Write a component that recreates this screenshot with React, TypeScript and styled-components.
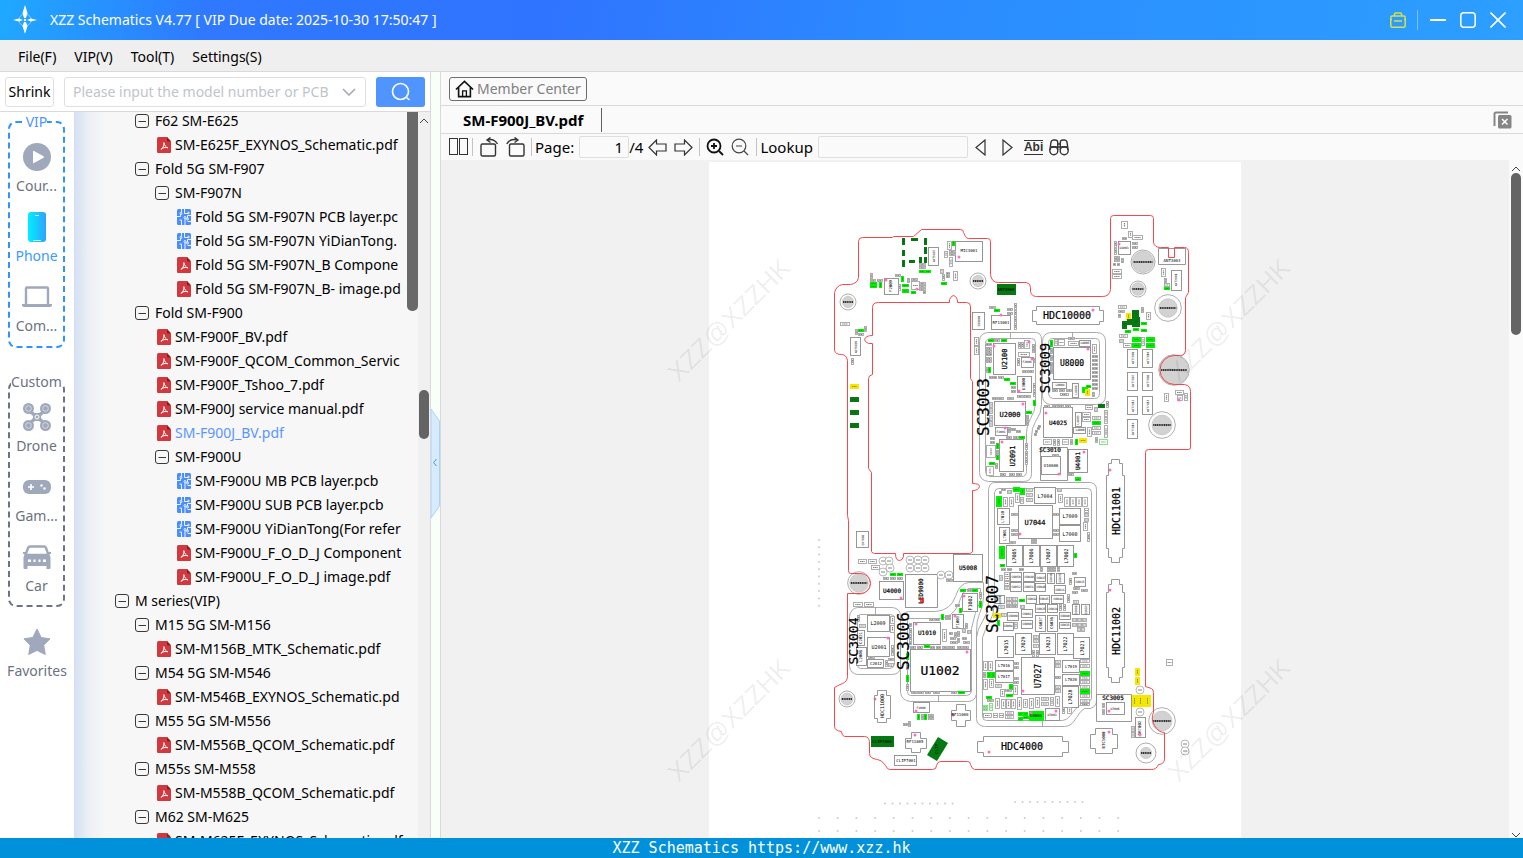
import React from "react";
import styled, { createGlobalStyle, css } from "styled-components";

const uiFont = `"Noto Sans", "Open Sans", sans-serif`;
const monoFont = `"DejaVu Sans Mono", "Liberation Mono", monospace`;

const Global = createGlobalStyle`
  * { box-sizing: border-box; }
  html, body { margin: 0; height: 100%; overflow: hidden; }
  body { font-family: ${uiFont}; font-size: 15px; line-height: 20px; color: #000; background: #fff; }
  button, input { font: inherit; color: inherit; }
  button { padding: 0; border: 0; background: none; display: inline-flex; align-items: center; justify-content: center; }
  svg { display: block; flex: none; }
`;

const Window = styled.div`
  display: flex;
  flex-direction: column;
  height: 100vh;
`;

const TitleBar = styled.header`
  display: flex;
  align-items: center;
  flex: none;
  height: 40px;
  padding: 0 10px;
  color: #fff;
  background: linear-gradient(100deg, #1fa9ff 0, #2f78ff 14%, #2f74ff 36%, #2b8bff 60%, #2c9fff 100%);
`;
const Title = styled.h1`
  margin: 0 auto 0 10px;
  font-size: 14px;
  font-weight: 400;
  white-space: nowrap;
`;
const WindowButton = styled.button`
  width: 30px;
  height: 30px;
`;
const TitleDivider = styled.span`
  width: 1px;
  height: 20px;
  margin: 0 5px 0 4px;
  background: #7fc0ff;
`;

const MenuBar = styled.nav`
  display: flex;
  align-items: center;
  gap: 18px;
  flex: none;
  height: 32px;
  padding: 2px 18px 0;
  font-size: 14px;
  background: #efefef;
  border-bottom: 1px solid #d9d9d9;
`;

const Body = styled.div`
  display: flex;
  flex: 1;
  min-height: 0;
`;
const Side = styled.aside`
  display: flex;
  flex-direction: column;
  flex: none;
  width: 431px;
  border-right: 1px solid #d9d9d9;
`;
const SearchRow = styled.form`
  display: flex;
  align-items: center;
  flex: none;
  height: 40px;
  padding: 0 5px;
  border-bottom: 1px solid #d9d9d9;
`;
const ShrinkButton = styled.button`
  width: 49px;
  height: 30px;
  margin-right: 10px;
  font-size: 14px;
  border: 1px solid #dcdfe6;
  border-radius: 3px;
`;
const SearchField = styled.label`
  display: flex;
  align-items: center;
  flex: 1;
  height: 30px;
  margin-right: 10px;
  padding: 0 9px 0 8px;
  font-size: 14px;
  border: 1px solid #dcdfe6;
  border-radius: 3px;
  input {
    flex: 1;
    min-width: 0;
    padding: 0;
    border: 0;
    outline: 0;
    background: none;
  }
  input::placeholder { color: #c0c4cc; opacity: 1; }
`;
const SearchButton = styled.button`
  width: 49px;
  height: 30px;
  border-radius: 3px;
  background: #4f94ff;
`;

const SideMain = styled.div`
  display: flex;
  flex: 1;
  min-height: 0;
`;
const Rail = styled.nav`
  flex: none;
  width: 74px;
  font-size: 14px;
`;
const RailGroup = styled.fieldset<{ $active?: boolean }>`
  width: 57px;
  height: ${(p) => (p.$active ? 236 : 235)}px;
  min-width: 0;
  margin: 0 0 ${(p) => (p.$active ? 24 : 4)}px 8px;
  padding: 0;
  border: 2px dashed ${(p) => (p.$active ? "#3095fa" : "#6b7385")};
  border-radius: 8px;
  legend {
    margin: 0 auto;
    padding: 0;
    color: ${(p) => (p.$active ? "#4f94ff" : "#6b7385")};
  }
`;
const RailItem = styled.button<{ $active?: boolean }>`
  display: flex;
  flex-direction: column;
  justify-content: flex-end;
  width: 100%;
  height: 70px;
  color: ${(p) => (p.$active ? "#3c9bff" : "#6b7280")};
`;
const RailIcon = styled.span`
  display: flex;
  flex: 1;
  align-items: center;
  padding-top: 12px;
`;
const RailTop = styled.div`
  display: flex;
  flex-direction: column;
  height: 210px;
  margin-top: -6px;
`;

const Tree = styled.div`
  display: flex;
  flex: 1;
  min-width: 0;
  overflow: hidden;
  background: linear-gradient(90deg, #d3dff2 0, #eceff5 14px, #f7f7f8 32px);
`;
const TreeList = styled.ul`
  flex: 1;
  min-width: 0;
  overflow: hidden;
  margin: -3px 0 0;
  padding: 0 0 0 41px;
  list-style: none;
`;
const TreeRow = styled.li<{ $level: number; $selected?: boolean }>`
  display: flex;
  align-items: center;
  height: 24px;
  padding-left: ${(p) => p.$level * 20}px;
  font-size: 14px;
  white-space: nowrap;
  ${(p) => p.$selected && css`color: #5b95ff;`}
`;
const IconSlot = styled.span<{ $file?: boolean }>`
  flex: none;
  width: 20px;
  padding-left: ${(p) => (p.$file ? 2 : 0)}px;
`;
const InnerBar = styled.div`
  flex: none;
  width: 11px;
  height: 199px;
  margin-left: 1px;
  background: #696969;
  border-radius: 0 0 5px 5px;
`;
const ScrollTrack = styled.div`
  display: flex;
  flex-direction: column;
  align-items: center;
  flex: none;
  width: 12px;
  padding-top: 6px;
  background: #f0f0f0;
`;
const Thumb = styled.div<{ $top: number; $height: number }>`
  width: 10px;
  height: ${(p) => p.$height}px;
  margin-top: ${(p) => p.$top}px;
  border-radius: 5px;
  background: #646464;
`;

const Gutter = styled.div`
  display: flex;
  align-items: center;
  flex: none;
  width: 9px;
  padding-top: 18px;
  background: #f8fff8;
`;

const Main = styled.main`
  display: flex;
  flex-direction: column;
  flex: 1;
  min-width: 0;
  background: #fafafa;
  border-left: 1px solid #d9d9d9;
`;
const MemberRow = styled.div`
  display: flex;
  align-items: center;
  flex: none;
  height: 34px;
  padding: 0 8px;
  border-bottom: 1px solid #d9d9d9;
`;
const MemberButton = styled.button`
  gap: 3px;
  height: 24px;
  padding: 0 5px;
  font-size: 14px;
  color: #808080;
  border: 1px solid #6e6e6e;
  border-radius: 3px;
`;
const TabRow = styled.div`
  display: flex;
  align-items: center;
  justify-content: space-between;
  flex: none;
  height: 28px;
  padding-right: 11px;
  border-bottom: 1px solid #d9d9d9;
`;
const Tab = styled.button`
  height: 24px;
  padding: 0 18px 0 22px;
  font-size: 15px;
  font-weight: 700;
  border-right: 1px solid #606060;
`;
const Tools = styled.div`
  display: flex;
  align-items: center;
  flex: none;
  height: 26px;
  padding-left: 8px;
`;
const Tool = styled.button<{ $width: number }>`
  width: ${(p) => p.$width}px;
  height: 24px;
`;
const ToolDivider = styled.span`
  width: 1px;
  height: 18px;
  margin: 0 3px;
  background: #c4c4c4;
`;
const ToolLabel = styled.label<{ $gap?: number }>`
  margin-right: ${(p) => p.$gap ?? 0}px;
`;
const ToolInput = styled.input<{ $width: number }>`
  width: ${(p) => p.$width}px;
  height: 22px;
  padding: 0 5px;
  text-align: right;
  background: #fafafa;
  border: 1px solid #dedede;
  border-radius: 2px;
`;
const WordButton = styled.button`
  height: 15px;
  margin: 0 6px 0 4px;
  font-family: "Liberation Sans", sans-serif;
  font-size: 12px;
  font-weight: 700;
  line-height: 13px;
  color: #333;
  border-top: 1px solid #333;
  border-bottom: 1px solid #333;
`;

const Viewer = styled.div`
  display: flex;
  flex: 1;
  min-height: 0;
`;
const Desk = styled.div`
  flex: 1;
  min-width: 0;
  overflow: hidden;
  padding-top: 2px;
  background: #f1f1f1;
`;
const Sheet = styled.div`
  width: 532px;
  height: 100%;
  margin: 0 auto;
  background: #fff;
  svg { overflow: visible; }
`;
const PageScroll = styled.div`
  display: flex;
  flex-direction: column;
  align-items: center;
  flex: none;
  width: 14px;
  padding-top: 6px;
`;
const Spacer = styled.div`
  flex: 1;
`;
const StatusBar = styled.footer`
  flex: none;
  height: 20px;
  font-family: ${monoFont};
  font-size: 15px;
  line-height: 20px;
  text-align: center;
  color: #fff;
  background: #0091da;
`;

/* ---------- interface icons ---------- */

const Chevron = ({ up = true }: { up?: boolean }) => (
  <svg width="10" height="6" viewBox="0 0 10 6" fill="none" stroke="#444">
    <path d={up ? "M1 5 5 1 9 5" : "M1 1 5 5 9 1"} />
  </svg>
);

const Compass = () => (
  <svg width="30" height="30" viewBox="0 0 30 30" fill="#fff">
    <circle cx="15" cy="15" r="6" fill="none" stroke="#8fd0ff" strokeWidth="1" />
    <path d="M15 0 17.500 8 16 13H14L12.500 8ZM15 29 12.500 21 14 17H16L17.500 21ZM3 15 9 13.500 13 15 9 16.500ZM27 15 21 16.500 17 15 21 13.500Z" />
    <circle cx="15" cy="15" r="1.200" />
  </svg>
);

const Minus = () => (
  <svg width="15" height="15" viewBox="0 0 15 15" fill="none" stroke="#3a3a3a">
    <rect x=".5" y=".5" width="13" height="13" rx="2.500" />
    <path d="M3.500 7.500H11" />
  </svg>
);

const Pdf = () => (
  <svg width="15" height="16" viewBox="0 0 15 16">
    <path d="M1.500 0H10L14 4.500V15Q14 16 13 16H1Q0 16 0 15V1.500Q0 0 1.500 0Z" fill="#d4383f" />
    <path d="M10 0 14 4.500H11Q10 4.500 10 3.500Z" fill="#8a1d22" />
    <path d="M6.800 5.500C7.500 8.500 9 10.500 11 10.800C8 9.800 5.500 11 3.800 12.300M7 5.800C7.200 9 5.500 11.500 4 12.300" fill="none" stroke="#fff" strokeWidth="1" />
  </svg>
);

const Pcb = () => (
  <svg width="15" height="16" viewBox="0 0 15 16" fill="none" stroke="#fff">
    <rect width="14" height="16" rx="1.500" fill="#4a8dfb" stroke="none" />
    <g strokeWidth=".9">
      <path d="M4.500 0V3.500M0 7.500H3.500V5.500M4.500 16V11H2.500M8 16V9.500M7.500 0V4.500H11M14 6.500H10.500V9M10.500 12.500H14" />
      <circle cx="4" cy="4.500" r="1" />
      <circle cx="8" cy="8.500" r="1" />
      <circle cx="11.500" cy="4" r=".8" />
      <circle cx="10.500" cy="10" r="1" />
    </g>
  </svg>
);

const slate = "#a0a8bb";
const RailIcons: Record<string, React.ReactNode> = {
  course: (
    <svg width="28" height="28" viewBox="0 0 28 28">
      <circle cx="14" cy="14" r="14" fill={slate} />
      <path d="M10 8.500V19.500Q10 20.500 11 20L20.500 14.800Q21.500 14 20.500 13.200L11 8Q10 7.500 10 8.500Z" fill="#fff" />
    </svg>
  ),
  phone: (
    <svg width="18" height="30" viewBox="0 0 18 30">
      <defs>
        <linearGradient id="phone" x1="0" x2="1">
          <stop offset="0" stopColor="#00f0ff" />
          <stop offset="1" stopColor="#2ea2ff" />
        </linearGradient>
      </defs>
      <rect width="18" height="30" rx="3" fill="url(#phone)" />
      <path d="M7 3.500H11M5 28.500H13" stroke="#c8f6ff" />
    </svg>
  ),
  computer: (
    <svg width="30" height="22" viewBox="0 0 30 22">
      <path d="M4 18V2.500Q4 1.500 5 1.500H25Q26 1.500 26 2.500V18" fill="none" stroke={slate} strokeWidth="2.400" />
      <path d="M0 18H30V19Q30 21 28 21H2Q0 21 0 19Z" fill={slate} />
    </svg>
  ),
  drone: (
    <svg width="28" height="28" viewBox="0 0 28 28" fill={slate}>
      <path d="M4 5 12 10H16L24 5 25 7 18 13V15L25 22 24 24 16 18H12L4 24 3 22 10 15V13L3 7Z" />
      {[5.5, 22.5].map((x) => [5.5, 22.5].map((y) => (
        <g key={`${x}${y}`}>
          <circle cx={x} cy={y} r="5.500" />
          <circle cx={x} cy={y} r="2.800" fill="none" stroke="#dfe3ea" strokeWidth=".8" />
        </g>
      )))}
      <circle cx="14" cy="14" r="2" fill={slate} stroke="#fff" />
    </svg>
  ),
  game: (
    <svg width="28" height="14" viewBox="0 0 28 14">
      <rect width="28" height="14" rx="6" fill={slate} />
      <path d="M8 4V10M5 7H11" stroke="#fff" strokeWidth="1.600" />
      <circle cx="18.500" cy="5.500" r="1.200" fill="#fff" />
      <circle cx="21.500" cy="8.500" r="1.200" fill="#fff" />
    </svg>
  ),
  car: (
    <svg width="28" height="24" viewBox="0 0 28 24">
      <path d="M7 1.500H21Q22.500 1.500 23 3L25.500 10H2.500L5 3Q5.500 1.500 7 1.500Z" fill="none" stroke={slate} strokeWidth="2.400" />
      <path d="M3 9H25L27.500 12V23Q27.500 24 26.500 24H23.500V21H4.500V24H1.500Q.5 24 .5 23V12ZM0 7H4V9H0ZM24 7H28V9H24Z" fill={slate} />
      <path d="M5 14.500H8V17H5ZM20 14.500H23V17H20ZM10.500 14.500H12.500V17H10.500ZM15.500 14.500H17.500V17H15.500Z" fill="#fff" />
    </svg>
  ),
  star: (
    <svg width="28" height="28" viewBox="0 0 28 28">
      <path d="M14 1 18.200 9.500 27 10.800 20.700 17.200 22.300 26.500 14 22.400 5.700 26.500 7.300 17.200 1 10.800 9.800 9.500Z" fill={slate} stroke={slate} strokeLinejoin="round" />
    </svg>
  ),
};

/* ---------- side tree ---------- */

type Node = [level: number, kind: "dir" | "pdf" | "pcb", name: string];
const nodes: Node[] = [
  [1, "dir", "F62 SM-E625"],
  [2, "pdf", "SM-E625F_EXYNOS_Schematic.pdf"],
  [1, "dir", "Fold 5G SM-F907"],
  [2, "dir", "SM-F907N"],
  [3, "pcb", "Fold 5G SM-F907N PCB layer.pc"],
  [3, "pcb", "Fold 5G SM-F907N YiDianTong."],
  [3, "pdf", "Fold 5G SM-F907N_B Compone"],
  [3, "pdf", "Fold 5G SM-F907N_B- image.pd"],
  [1, "dir", "Fold SM-F900"],
  [2, "pdf", "SM-F900F_BV.pdf"],
  [2, "pdf", "SM-F900F_QCOM_Common_Servic"],
  [2, "pdf", "SM-F900F_Tshoo_7.pdf"],
  [2, "pdf", "SM-F900J service manual.pdf"],
  [2, "pdf", "SM-F900J_BV.pdf"],
  [2, "dir", "SM-F900U"],
  [3, "pcb", "SM-F900U MB PCB layer.pcb"],
  [3, "pcb", "SM-F900U SUB PCB layer.pcb"],
  [3, "pcb", "SM-F900U YiDianTong(For refer"],
  [3, "pdf", "SM-F900U_F_O_D_J Component"],
  [3, "pdf", "SM-F900U_F_O_D_J image.pdf"],
  [0, "dir", "M series(VIP)"],
  [1, "dir", "M15 5G SM-M156"],
  [2, "pdf", "SM-M156B_MTK_Schematic.pdf"],
  [1, "dir", "M54 5G SM-M546"],
  [2, "pdf", "SM-M546B_EXYNOS_Schematic.pd"],
  [1, "dir", "M55 5G SM-M556"],
  [2, "pdf", "SM-M556B_QCOM_Schematic.pdf"],
  [1, "dir", "M55s SM-M558"],
  [2, "pdf", "SM-M558B_QCOM_Schematic.pdf"],
  [1, "dir", "M62 SM-M625"],
  [2, "pdf", "SM-M625F_EXYNOS_Schematic.pdf"],
];
const openFile = "SM-F900J_BV.pdf";

/* ---------- board drawing ---------- */

/* Each zone lists its parts in thirds of a page pixel from the zone's origin. */
type Chip = [x: number, y: number, w: number, h: number, label: string, size: number, vertical?: 1];
type Zone = {
  x: number;
  y: number;
  parts: string;
  chips: Chip[];
  dots: string;
  holes: string;
  pads: string;
};

const zones: Zone[] = [
  {
    x: 820,
    y: 200,
    parts: `245,115,10,20,d 273,115,20,10,d 313,115,10,20,d 245,149,10,18,d 313,141,10,20,d 245,180,10,20,d 267,180,18,10,d 296,171,10,18,d 313,170,10,18,d
      380,122,14,28 397,122,9,15,g 373,152,12,20 386,150,20,10 386,160,20,10 387,172,12,30 400,214,14,30 296,190,20,8 296,198,20,8 297,209,18,9,g 316,209,18,9,g
      359,206,12,16 366,222,10,20 377,215,12,10 377,226,12,10 362,245,18,9,g 151,218,10,18 151,238,18,8 170,238,18,8 151,247,20,9,g 151,256,20,9,g 178,247,10,18,g
      224,223,18,9 243,228,10,18,g 235,253,10,22 247,253,20,9,g 247,266,20,12,g 262,233,9,16 272,233,20,10 272,243,26,28 273,273,14,8,g 298,245,20,9 298,255,20,9 298,265,20,9 308,274,9,10
      59,365,30,12 105,388,9,18 114,388,18,9,g 114,398,18,9 133,379,10,18 94,474,10,20 90,553,26,16,y 90,590,26,14,d 90,629,26,14,d 90,668,26,14,d
      508,317,20,10 521,326,18,9,g 560,325,18,9 560,335,18,9 582,308,10,20 582,329,10,20 582,350,10,20 582,368,10,20 463,410,14,28 463,438,14,28 532,252,58,34,d`,
    chips: [
      [325, 140, 33, 58, "ANT5007", 3, 1],
      [405, 122, 83, 62, "MIC3001", 4],
      [191, 233, 44, 50, "F2009", 4, 1],
      [91, 412, 34, 56, "ANT1005", 3, 1],
      [457, 337, 40, 54, "CN9000", 3, 1],
      [512, 345, 60, 45, "RF13001", 4],
    ],
    dots: "417,172 198,241 292,267 542,345",
    holes: "473,242,24,17 85,306,24,17",
    pads: "",
  },
  {
    x: 970,
    y: 200,
    parts: `454,64,22,24 473,94,14,22 487,106,34,16 456,112,16,10 433,122,10,20 433,144,10,20 486,126,18,10 486,137,18,10 433,168,8,18 442,168,8,18 452,175,8,14 428,190,10,8 440,190,10,8 425,206,30,14 425,221,30,14
      574,203,16,26 582,234,10,14 582,248,18,12 582,261,18,10,g 444,315,28,12 445,330,20,10 445,342,10,12 467,338,16,22,y 456,362,14,24,d 472,358,14,18,d 485,330,20,20,d 485,350,25,30,d 466,390,18,10,g 488,383,18,10,g
      512,322,10,18 527,335,14,24 514,365,18,10,g 514,386,18,10,g 447,402,28,12 447,417,14,12 458,428,26,14 485,412,28,14,g 485,428,28,14,g 528,412,28,14,g 528,428,28,14,g 514,412,12,28
      240,420,9,20,g 251,418,12,22 264,418,20,20 293,423,32,16 293,412,20,10 366,432,16,30 240,445,8,18 240,465,8,18 240,485,8,18 240,505,8,18 247,568,18,10 267,568,18,10 287,568,18,10 270,580,28,10 335,560,18,18,g 345,568,16,22,y 349,556,14,10,g
      366,465,8,10 375,465,8,10 366,477,8,10 375,477,8,10 366,489,8,10 375,489,8,10 366,501,8,10 375,501,8,10 366,513,8,10 375,513,8,10 366,525,8,10 375,525,8,10 366,537,8,10 375,537,8,10 366,549,8,10 375,549,8,10 366,561,8,10 375,561,8,10 366,575,8,16
      54,416,18,9,g 93,416,18,9,g 73,416,18,9 48,430,9,9 57,430,9,9 48,440,18,9 48,450,18,9 48,460,9,9 57,460,9,9 48,470,18,9 48,480,18,9 55,500,10,18,g 46,500,9,18 143,425,9,20 153,425,9,20 163,420,18,28 186,432,10,20 145,455,35,14 142,475,9,24 190,475,10,16 155,510,18,8 174,510,18,8
      56,528,16,10 73,528,10,10 84,528,18,10 101,535,18,9,g 121,545,18,10,g 124,558,14,10 124,569,14,10 189,600,10,18,g 168,634,18,10,g 188,548,9,20 188,570,9,20 65,592,16,10 82,592,22,10 110,592,20,10 140,584,20,9 162,584,20,9 58,606,12,18 58,625,12,18 58,644,12,18 58,663,12,18 168,645,10,14 168,660,10,18
      113,680,8,18 122,685,14,10 137,690,16,10 148,708,18,9,g 108,708,18,8 128,708,18,8 48,736,30,38 48,798,24,30 78,730,10,18,g 78,749,10,15 78,765,10,16,g 58,787,18,9,g 60,712,16,10 60,724,16,10 76,790,10,18 118,820,18,8 138,820,18,8 90,820,18,8 164,730,10,20 164,752,10,20 164,774,10,20
      222,614,18,8 245,614,18,8 265,614,18,8 285,614,18,8 345,614,24,14 372,622,12,16 385,612,20,12,d 407,602,9,20 337,636,28,14 337,652,28,14 366,647,26,12 366,662,26,12,g 366,677,28,12 366,692,28,12 350,680,14,30 403,630,12,20 403,652,12,20 403,674,12,38 387,716,28,18,o
      219,716,28,18 250,716,10,20 262,716,10,20 276,716,20,18 300,716,9,18 316,718,9,18,g 326,713,24,14,y 376,712,9,18 316,832,18,9,g 247,762,20,8 582,578,14,28 615,570,26,14 620,585,18,18 643,578,12,24
      195,690,9,9 200,682,9,9 193,700,9,9 205,675,9,9 186,440,10,18 12,410,14,28 12,438,14,28`,
    chips: [
      [443, 124, 40, 42, "U1003", 3],
      [602, 210, 34, 62, "ANT3001", 3, 1],
      [472, 446, 34, 56, "ANT7009", 3, 1],
      [517, 446, 34, 56, "ANT7010", 3, 1],
      [472, 515, 34, 56, "ANT7007", 3, 1],
      [517, 515, 34, 56, "ANT7008", 3, 1],
      [472, 588, 34, 58, "ANT7012", 3, 1],
      [517, 588, 34, 58, "ANT7013", 3, 1],
      [472, 657, 34, 60, "ANT7014", 3, 1],
      [248, 440, 114, 100, "U8000", 8],
      [328, 420, 36, 20, "L8005", 3],
      [247, 545, 44, 22, "L8004", 3],
      [306, 548, 22, 44, "L8006", 3, 1],
      [68, 428, 70, 96, "U2100", 7, 1],
      [152, 470, 38, 34, "F2008", 3],
      [140, 527, 46, 52, "U3000", 4, 1],
      [72, 604, 95, 76, "U2000", 7],
      [75, 682, 38, 26, "F2001", 3],
      [88, 718, 75, 98, "U2091", 7, 1],
      [218, 622, 90, 92, "U4025", 6],
      [315, 636, 20, 46, "L4003", 3, 1],
      [309, 680, 40, 20, "L4000", 3],
      [214, 768, 60, 58, "U10000", 4],
      [295, 748, 60, 72, "U4001", 6, 1],
    ],
    dots: "354,447 72,437 159,611 147,573 229,638 421,811 343,757 267,823 368,329 448,131 176,426 186,476 104,685 96,727 628,599",
    holes: "520,187,36,32 505,267,24,19 593,323,40,28 612,509,46,44 577,675,40,30",
    pads: "",
  },
  {
    x: 820,
    y: 480,
    parts: `113,238,28,14 143,238,26,14 154,254,26,14 210,280,18,9,g 230,280,18,9,g 190,290,18,10 210,290,18,10 230,290,18,10 378,297,20,10 100,365,30,14 132,365,30,14
      209,408,14,24 209,434,14,24 213,496,10,34 196,540,8,20 112,404,8,20 116,432,20,12 205,535,20,10 145,528,20,9 205,550,18,12
      420,327,18,9,g 440,327,16,9 457,327,18,9,g 476,335,10,20 476,362,10,20,g 416,385,10,16,g 405,373,14,10 326,413,18,10 345,413,16,10 364,403,10,18,g 375,405,8,16 385,405,8,14 268,430,9,12 268,444,9,20 268,466,9,20 268,486,9,8 365,446,16,40
      388,455,12,9 401,455,10,18 412,452,10,18 425,445,12,14 436,430,10,18 390,472,18,9 412,475,10,16 425,472,16,9 390,484,24,9 428,484,20,9 440,450,12,12
      270,497,18,9 290,497,18,9 311,496,18,10,g 330,497,16,9 348,497,16,9 366,497,20,9 388,497,18,9 410,497,18,9 430,497,18,9 258,520,10,20,g 258,548,10,20 258,585,10,20,g 258,612,10,20 272,634,20,9 294,634,18,9 314,634,18,9 340,634,20,9 394,634,18,9 413,634,20,9,g
      291,702,10,18,g 302,702,9,18 312,702,10,18,g 323,702,9,18 333,702,9,18 248,730,16,10 265,722,10,18 153,769,68,32,d`,
    chips: [
      [109, 154, 40, 52, "CN7000", 3, 1],
      [398, 223, 90, 84, "U5008", 6],
      [178, 303, 74, 58, "U4000", 6],
      [254, 283, 98, 102, "LED9000", 6, 1],
      [140, 404, 68, 50, "L2009", 5],
      [112, 450, 24, 48, "C2021", 4, 1],
      [108, 500, 32, 56, "L2008", 4, 1],
      [142, 470, 70, 60, "U2001", 5],
      [142, 538, 52, 28, "C2012", 4],
      [426, 340, 48, 56, "F1002", 5, 1],
      [395, 402, 36, 46, "F1003", 4, 1],
      [278, 426, 84, 68, "U1010", 6],
      [269, 506, 182, 128, "U1002", 13],
      [278, 666, 50, 34, "F1000", 3],
      [223, 826, 70, 34, "CLIP7001", 4],
    ],
    dots: "243,353 203,475 433,347 404,409 289,432 442,515 288,692 399,705 286,764 165,657",
    holes: "118,309,34,28 82,656,24,18",
    pads: "188,243 208,243 210,265 190,275 270,241 293,241 316,241 270,264 293,264 316,264 364,286 386,286",
  },
  {
    x: 970,
    y: 470,
    parts: `79,78,18,32,g 98,80,15,30 116,80,15,30 128,52,20,14,g 150,55,16,20,g 92,54,14,9 86,64,10,8 110,60,16,12 134,70,14,30 150,80,12,20 168,55,20,12 168,70,20,12 168,84,20,12 262,55,16,12 264,72,14,28 283,80,17,30 301,80,17,30 319,80,17,30 337,80,17,30
      341,115,16,14 341,130,16,12 341,143,16,12 338,155,16,28 350,185,10,30 122,130,20,10 122,178,20,10 122,190,20,10 118,212,22,10 248,130,18,10 248,178,18,10 248,190,18,10 182,206,10,16 193,206,10,16 88,228,18,38,g 90,283,16,8,g 313,250,10,16,g
      92,294,16,8 110,294,16,8 148,294,16,8 210,290,9,14 230,290,9,14 240,290,9,14 250,290,9,14 262,290,9,14 102,305,18,14 102,319,18,14 102,333,18,14 88,315,12,18 102,347,18,12 305,307,16,10 298,325,10,20 310,350,20,10 332,358,20,9 290,372,10,26 306,364,18,10 310,390,18,12
      107,380,18,12 127,380,18,12 107,393,18,12 127,393,18,12 107,406,18,10 127,406,18,10 85,406,20,12 146,388,18,9,g 68,428,24,16,y 82,450,10,18,g 94,430,18,12 132,455,12,22 150,405,14,12 268,403,10,20 280,403,10,20 306,445,14,12 321,445,14,12 336,445,14,12 306,458,14,12 321,458,14,12 336,458,14,12 320,472,12,16 334,472,12,16
      188,495,18,12 188,508,18,12 188,522,18,12 185,540,10,20 197,540,10,20 130,575,18,10 130,587,18,10 255,570,18,12 255,583,18,12 130,620,18,10 130,632,18,10 255,618,18,10 255,645,18,12 255,658,18,12
      331,568,31,12 331,581,31,12 331,604,31,14,g 331,618,31,12 331,631,31,12 331,644,31,12 331,658,31,14,g 331,673,31,12 331,687,31,12 331,700,31,10
      38,572,15,30 55,572,15,30 50,606,11,18,g 62,606,11,18,g 38,606,10,18 40,628,14,32 56,628,15,26 75,642,20,12 90,656,14,24 116,642,12,18,g 130,645,14,30 108,672,20,10,g 48,677,18,9,g 106,656,20,10
      38,705,16,8,o 38,715,16,8,o 56,700,12,24,o 52,688,20,10 74,685,14,32 92,688,14,30 108,688,14,30 124,688,14,30 142,680,14,38 158,688,14,26 176,685,14,32 194,680,14,34 212,682,24,12 212,696,24,12 240,680,12,28 256,678,16,34 276,712,10,20 290,710,14,22
      38,730,28,14 70,730,16,14 88,730,16,14 106,722,26,12 106,736,26,12 143,725,16,12,g 160,725,14,12,g 143,740,14,12,g 158,739,18,10,g 178,722,44,30,g
      397,700,9,16 397,717,9,18 496,595,16,25,y 496,621,16,25,y 482,676,20,36,y 502,676,20,36,y 522,676,20,36,y 482,768,12,18 482,787,12,18 589,566,22,20 295,10,18,10 316,24,18,9,g`,
    chips: [
      [191, 52, 65, 50, "L7004", 5],
      [143, 104, 104, 101, "U7044", 7],
      [267, 113, 65, 52, "L7009", 5],
      [267, 166, 65, 52, "L7008", 5],
      [80, 114, 40, 52, "L7010", 4, 1],
      [88, 170, 34, 52, "L7001", 4, 1],
      [107, 226, 50, 66, "L7005", 5, 1],
      [158, 226, 50, 66, "L7006", 5, 1],
      [210, 224, 50, 66, "L7007", 5, 1],
      [262, 224, 50, 66, "L7002", 5, 1],
      [121, 305, 36, 29, "C6050", 3],
      [158, 305, 36, 29, "C6049", 3],
      [121, 336, 36, 29, "C6052", 3],
      [158, 336, 36, 29, "C6051", 3],
      [195, 309, 34, 28, "C6047", 3],
      [195, 338, 34, 28, "C6046", 3],
      [231, 309, 24, 32, "C6048", 3, 1],
      [257, 309, 28, 32, "C6033", 3, 1],
      [252, 345, 36, 28, "C6011", 3],
      [311, 320, 36, 30, "C6015", 3],
      [75, 375, 30, 28, "C6001", 3, 1],
      [168, 374, 34, 26, "C6042", 3],
      [206, 374, 34, 26, "C6045", 3],
      [244, 374, 38, 26, "C6044", 3],
      [112, 426, 36, 26, "C6009", 3],
      [98, 455, 32, 28, "C6004", 3],
      [152, 418, 36, 28, "C6061", 3],
      [152, 449, 36, 28, "C6060", 3],
      [195, 403, 34, 28, "C6025", 3],
      [231, 403, 34, 28, "C6024", 3],
      [196, 434, 32, 52, "C6037", 4, 1],
      [230, 434, 32, 52, "C6036", 4, 1],
      [268, 425, 36, 24, "C6080", 3],
      [268, 455, 36, 22, "C6035", 3],
      [306, 403, 24, 34, "C6088", 3, 1],
      [334, 403, 28, 34, "C6083", 3, 1],
      [82, 498, 50, 66, "L7015", 5, 1],
      [134, 490, 50, 66, "L7029", 5, 1],
      [208, 488, 50, 66, "L7023", 5, 1],
      [260, 488, 50, 66, "L7022", 5, 1],
      [310, 500, 50, 66, "L7021", 5, 1],
      [152, 562, 102, 114, "U7027", 8, 1],
      [74, 570, 56, 33, "L7016", 4],
      [74, 604, 56, 36, "L7017", 4],
      [275, 570, 55, 40, "L7019", 4],
      [275, 611, 55, 36, "L7020", 4],
      [275, 647, 50, 66, "L7028", 5, 1],
      [224, 715, 46, 38, "U7003", 3],
      [408, 697, 56, 40, "U7006", 3],
      [494, 742, 34, 64, "BR7002", 4, 1],
    ],
    dots: "151,193 158,664 259,724 182,730 416,723 418,787 510,796 421,361 56,845",
    holes: "577,753,40,30 529,850,30,17",
    pads: "511,661 511,726 646,821 646,843",
  },
];

const fills: Record<string, string> = { g: "#00f000", d: "#067a12", y: "#f6e600", o: "#fff" };
const third = (origin: number, v: number) => origin + Math.round(v / 3);

const Part = ({ zone, spec }: { zone: Zone; spec: string }) => {
  const [a, b, c, d, kind] = spec.split(",");
  const x = third(zone.x, +a);
  const y = third(zone.y, +b);
  const w = Math.max(3, third(0, +c));
  const h = Math.max(3, third(0, +d));
  const tall = h > w;
  const stroke = kind === "o" ? "#7ee87e" : kind ? fills[kind] : "#a6a6a6";
  return (
    <g>
      <rect x={x + 0.5} y={y + 0.5} width={w - 1} height={h - 1} fill={kind ? fills[kind] : "#fff"} stroke={stroke} strokeWidth={kind ? 1 : 0.9} />
      <path
        d={tall ? `M${x + w / 2} ${y + h * 0.25}V${y + h * 0.75}` : `M${x + w * 0.22} ${y + h / 2}H${x + w * 0.78}`}
        stroke={kind ? "#1b4d12" : "#777"}
        strokeOpacity={kind ? 0.5 : 0.9}
        strokeWidth={kind ? 1 : 1.2}
        strokeDasharray="1.300 .400"
      />
    </g>
  );
};

const Label = ({ x, y, size, vertical, children }: { x: number; y: number; size: number; vertical?: boolean; children: string }) => (
  <text
    x={x}
    y={y + size * 0.36}
    fontSize={size}
    textAnchor="middle"
    fill="#000"
    stroke="#000"
    strokeWidth={size > 5 ? 0.2 : 0}
    transform={vertical ? `rotate(-90 ${x} ${y})` : undefined}
  >
    {children}
  </text>
);

const ZoneView = ({ zone }: { zone: Zone }) => {
  const list = (s: string) => s.split(/\s+/).filter(Boolean);
  return (
    <g>
      {list(zone.holes).map((s) => {
        const [x, y, r, inner] = s.split(",").map(Number);
        const cx = third(zone.x, x);
        const cy = third(zone.y, y);
        return (
          <g key={s}>
            <circle cx={cx} cy={cy} r={r / 3} fill="#fff" stroke="#999" strokeWidth=".8" />
            <circle cx={cx} cy={cy} r={inner / 3} fill="#d2d2d2" stroke="#b5b5b5" strokeWidth=".5" />
            <path d={`M${cx - inner / 3.4} ${cy}H${cx + inner / 3.4}`} stroke="#333" strokeWidth="1.800" strokeDasharray="1.300 .500" />
          </g>
        );
      })}
      {zone.chips.map(([x, y, w, h, label, size, vertical]) => (
        <g key={label + x}>
          <rect x={third(zone.x, x) + 0.5} y={third(zone.y, y) + 0.5} width={third(0, w) - 1} height={third(0, h) - 1} fill="#fff" stroke="#8c8c8c" strokeWidth=".9" />
          <Label x={third(zone.x, x + w / 2)} y={third(zone.y, y + h / 2)} size={size} vertical={!!vertical}>{label}</Label>
        </g>
      ))}
      {list(zone.parts).map((s, i) => <Part key={i} zone={zone} spec={s} />)}
      {list(zone.pads).map((s) => {
        const [x, y] = s.split(",").map(Number);
        const cx = third(zone.x, x);
        const cy = third(zone.y, y);
        return (
          <g key={s}>
            <circle cx={cx} cy={cy} r="4" fill="#fff" stroke="#999" strokeWidth=".7" />
            <path d={`M${cx - 2} ${cy}H${cx + 2}`} stroke="#666" strokeWidth=".8" />
          </g>
        );
      })}
      {list(zone.dots).map((s) => {
        const [x, y] = s.split(",").map(Number);
        return <circle key={s} cx={third(zone.x, x)} cy={third(zone.y, y)} r="1.500" fill="#ff6fc4" />;
      })}
    </g>
  );
};

const outline = `M858 241Q858 237 862 237H892L893 236H913L921 229H960Q963 229 963 232L965 236Q966 238 968 238H987Q990 238 990 241V274Q991 282 998 282H1026Q1030 283 1030 287V291Q1031 296 1036 296H1102Q1109 296 1110 289V218Q1110 215 1113 215H1150Q1153 215 1153 218V242Q1154 247 1160 247H1168V257H1174V247H1184Q1188 247 1188 252V292L1185 297V350Q1184 355 1180 355H1174A14.500 14.500 0 0 0 1174 384H1184Q1190 385 1190 391V447Q1190 449 1188 449H1148Q1145 449 1145 452V686L1151 688Q1153 689 1153 692V712Q1150 718 1154 725Q1158 732 1164 732V759Q1163 764 1158 764Q1156 769 1151 769H974Q971 768 970 764Q970 761 967 761H940Q937 761 936 765Q936 769 932 769H889Q887 769 885 765Q881 759 877 759Q869 758 869 753V741Q868 736 864 736H844Q841 735 841 731Q834 730 834 726V687Q837 685 842 683Q847 681 847 676V593H860A9.500 9.500 0 0 0 860 573H850Q848 573 848 570V520L847 515V360Q846 354 841 354Q835 354 834 350V292Q836 285 842 284H850Q857 283 858 277Z`;
const cutout = `M872 307Q872 302 878 302H949V299Q951 295 953 295Q957 296 957 302H966Q970 302 970 306V378L972 381V483Q979 483 979 486Q978 490 972 490V551Q971 553 969 553H903V556Q902 560 899 560Q895 560 895 553H874Q872 553 871 551V472L868 468V378Q868 375 872 374V343H868Q864 341 864 339Q865 335 872 335Z`;
const shields = [
  "M987 332H1035Q1041 332 1041 339V404Q1041 413 1035 421Q1031 427 1031 437V473Q1031 481 1023 481H988Q979 480 979 472V341Q979 333 987 332Z",
  "M990 338H1031Q1035 338 1035 342V402Q1035 410 1030 418Q1026 425 1026 432V471Q1026 476 1021 476H989Q985 475 985 471V343Q985 339 990 338Z",
  "M1050 332H1096Q1105 332 1105 341V395Q1105 404 1096 404H1050Q1042 403 1042 395V341Q1042 333 1050 332Z",
  "M1052 338H1095Q1099 338 1099 343V393Q1099 398 1094 398H1052Q1048 397 1048 393V343Q1048 338 1052 338Z",
  "M857 607H892Q900 608 900 616V667Q899 674 891 674H857Q850 673 849 666V616Q850 608 857 607Z",
  "M860 614H890Q894 614 894 618V664Q893 668 889 668H860Q857 668 857 664V618Q857 614 860 614Z",
  "M908 611H935Q950 610 955 596Q959 583 968 582H983V596Q983 606 979 613Q976 620 976 630V693Q975 701 967 701H910Q901 700 900 692V619Q901 612 908 611Z",
  "M908 618H938Q952 617 958 604Q962 590 968 588H980V600Q974 612 971 628V691Q970 695 966 695H910Q907 695 907 691V620Z",
  "M993 482H1090Q1096 483 1096 489V700Q1096 706 1090 708H1084Q1080 710 1076 717Q1071 726 1064 726H984Q976 725 976 718V637Q977 628 982 621Q988 612 988 602V489Q989 483 993 482Z",
  "M998 488H1087Q1091 488 1091 492V698Q1090 702 1082 703Q1075 707 1070 715Q1066 720 1062 720H986Q982 720 982 716V637Q984 630 988 624Q994 614 994 602V492Q995 488 998 488Z",
];
const connectors = [
  "M1036 306H1099V310H1103V321H1099V324H1036V321H1032V310H1036Z",
  "M1111 459H1119V463H1122V475H1124V548H1122V557H1119V562H1111V557H1108V548H1106V475H1108V463H1111Z",
  "M1111 579H1119V584H1122V592H1124V667H1122V677H1119V682H1111V677H1108V667H1106V592H1108V584H1111Z",
  "M983 736H1062V741H1068V752H1062V756H983V752H977V741H983Z",
  "M877 690H886V695H890V718H886V722H877V718H874V695H877Z",
  "M911 732H920V738H926V748H920V752H911V748H905V738H911Z",
  "M956 704H965V710H970V720H965V726H956V720H951V710H956Z",
  "M1095 728H1112V734H1117V748H1112V753H1095V748H1090V734H1095Z",
  "M1158 248H1185V264H1158Z",
  "M1096 694H1131V721H1096Z",
  "M1040 447H1067V480H1040Z",
];
type Title = [text: string, x: number, y: number, size: number, vertical?: 1];
const titles: Title[] = [
  ["SC3003", 983, 407, 16, 1],
  ["SC3009", 1045, 368, 14, 1],
  ["SC3004", 853, 641, 13, 1],
  ["SC3006", 903, 641, 16, 1],
  ["SC3007", 992, 604, 16, 1],
  ["HDC10000", 1067, 315, 10],
  ["HDC11001", 1116, 511, 10, 1],
  ["HDC11002", 1116, 631, 10, 1],
  ["HDC4000", 1022, 746, 10],
  ["SC3010", 1050, 450, 6],
  ["SC3005", 1113, 698, 6],
  ["HDC11000", 882, 706, 5, 1],
  ["ANT3003", 1172, 261, 4],
  ["RF11005", 915, 742, 4],
  ["RF11000", 960, 715, 4],
  ["BTC5000", 1104, 740, 4, 1],
  ["CLIP7000", 882, 742, 4],
  ["ANT3000", 1006, 290, 4],
  ["U4003", 1036, 716, 4],
];
const marks = [
  [729, 320],
  [1229, 320],
  [729, 720],
  [1229, 720],
];
const row = (n: number, x: number, y: number, step: number) => Array.from({ length: n }, (_, i) => [x + i * step, y]);
const specks = [
  ...row(10, 885, 803.5, 7.5),
  ...row(10, 1015, 802, 7.5),
  ...row(17, 819, 818, 18.7),
  ...row(17, 819, 831, 18.7),
  ...Array.from({ length: 10 }, (_, i) => [819, 540 + i * 7.3]),
];

const Board = () => (
  <svg width="532" height="676" viewBox="709 162 532 676" fontFamily={monoFont} role="img" aria-label="Board view">
    <g fill="none" stroke="#a0a0a0" strokeWidth=".9" transform="translate(.5 .5)">
      {shields.map((d) => <path key={d} d={d} />)}
      <path d="M1010 332V338M1072 332V338M875 607V614M938 695V701M1042 720V726" />
    </g>
    {zones.map((z) => <ZoneView key={`${z.x}-${z.y}`} zone={z} />)}
    <g fill="none" stroke="#8c8c8c" strokeWidth=".9" transform="translate(.5 .5)">
      {connectors.map((d) => <path key={d} d={d} />)}
    </g>
    <path d="M938 737 948 743 937 761 927 755Z" fill="#067a12" />
    <Label x={937} y={749} size={4} vertical>CLIP</Label>
    <g fill="none" stroke="#f5484e" transform="translate(.5 .5)">
      <path d={outline} />
      <path d={cutout} />
    </g>
    <path d="M920 598H924V603H920Z" fill="#e02020" fillOpacity=".8" />
    {titles.map(([text, x, y, size, vertical]) => (
      <Label key={text} x={x} y={y} size={size} vertical={!!vertical}>{text}</Label>
    ))}
    {specks.map(([x, y]) => <circle key={`${x}-${y}`} cx={x} cy={y} r="1" fill="#ccc" />)}
    <g fill="#000" fillOpacity=".08" fontFamily="Liberation Sans, sans-serif" fontSize="26" textAnchor="middle">
      {marks.map(([x, y]) => (
        <text key={`${x}-${y}`} x={x} y={y + 9} transform={`rotate(-45 ${x} ${y})`}>XZZ@XZZHK</text>
      ))}
    </g>
  </svg>
);

/* ---------- page ---------- */

const RailButton = ({ icon, label, active }: { icon: string; label: string; active?: boolean }) => (
  <RailItem type="button" $active={active}>
    <RailIcon>{RailIcons[icon]}</RailIcon>
    {label}
  </RailItem>
);

export default function App() {
  return (
    <Window>
      <Global />
      <TitleBar>
        <Compass />
        <Title>XZZ Schematics V4.77 [ VIP Due date: 2025-10-30 17:50:47 ]</Title>
        <WindowButton type="button" aria-label="Toolbox">
          <svg width="16" height="16" viewBox="0 0 16 16" fill="none" stroke="#d5e04a" strokeWidth="1.500">
            <rect x=".8" y="4" width="14.400" height="11.200" rx="1.500" />
            <path d="M4.500 4V2Q4.500 1 5.500 1H10.500Q11.500 1 11.500 2V4M1 7.500H2M14 7.500H15M4 9H12" />
          </svg>
        </WindowButton>
        <TitleDivider />
        <WindowButton type="button" aria-label="Minimize">
          <svg width="16" height="16" viewBox="0 0 16 16" stroke="#fff" strokeWidth="2"><path d="M0 8H16" /></svg>
        </WindowButton>
        <WindowButton type="button" aria-label="Maximize">
          <svg width="16" height="16" viewBox="0 0 16 16" fill="none" stroke="#fff" strokeWidth="1.500"><rect x=".8" y=".8" width="14.400" height="14.400" rx="3" /></svg>
        </WindowButton>
        <WindowButton type="button" aria-label="Close">
          <svg width="16" height="16" viewBox="0 0 16 16" stroke="#fff" strokeWidth="1.600"><path d="M.5.5 15.500 15.500M15.500.5.5 15.500" /></svg>
        </WindowButton>
      </TitleBar>

      <MenuBar>
        {["File(F)", "VIP(V)", "Tool(T)", "Settings(S)"].map((m) => <button key={m} type="button">{m}</button>)}
      </MenuBar>

      <Body>
        <Side>
          <SearchRow>
            <ShrinkButton type="button">Shrink</ShrinkButton>
            <SearchField>
              <input aria-label="Model search" placeholder="Please input the model number or PCB" />
              <svg width="14" height="8" viewBox="0 0 14 8" fill="none" stroke="#a3a7b0" strokeWidth="1.500"><path d="M1 1 7 7 13 1" /></svg>
            </SearchField>
            <SearchButton type="button" aria-label="Search">
              <svg width="20" height="20" viewBox="0 0 20 20" fill="none" stroke="#fff" strokeWidth="1.600">
                <circle cx="9.500" cy="9.500" r="8" />
                <path d="M15.500 15.500 18.500 18" />
              </svg>
            </SearchButton>
          </SearchRow>
          <SideMain>
            <Rail>
              <RailGroup $active>
                <legend>VIP</legend>
                <RailTop>
                  <RailButton icon="course" label="Cour..." />
                  <RailButton icon="phone" label="Phone" active />
                  <RailButton icon="computer" label="Com..." />
                </RailTop>
              </RailGroup>
              <RailGroup>
                <legend>Custom</legend>
                <RailTop>
                  <RailButton icon="drone" label="Drone" />
                  <RailButton icon="game" label="Gam..." />
                  <RailButton icon="car" label="Car" />
                </RailTop>
              </RailGroup>
              <RailButton icon="star" label="Favorites" />
            </Rail>
            <Tree>
              <TreeList>
                {nodes.map(([level, kind, name]) => (
                  <TreeRow key={name} $level={level} $selected={name === openFile}>
                    <IconSlot $file={kind !== "dir"}>
                      {kind === "dir" ? <Minus /> : kind === "pdf" ? <Pdf /> : <Pcb />}
                    </IconSlot>
                    {name}
                  </TreeRow>
                ))}
              </TreeList>
              <InnerBar />
            </Tree>
            <ScrollTrack>
              <Chevron />
              <Thumb $top={266} $height={49} />
            </ScrollTrack>
          </SideMain>
        </Side>

        <Gutter>
          <button type="button" aria-label="Collapse panel">
            <svg width="9" height="112" viewBox="0 0 9 112" fill="none">
              <path d="M0 1 8.500 13V98L0 110Z" fill="#d6ebfe" stroke="#a9d3fa" />
              <path d="M5.500 51 2.500 54.500 5.500 58" stroke="#3e97e8" />
            </svg>
          </button>
        </Gutter>

        <Main>
          <MemberRow>
            <MemberButton type="button">
              <svg width="19" height="20" viewBox="0 0 20 20" fill="none" stroke="#111" strokeWidth="1.700">
                <path d="M1 10.500 10 2 19 10.500M3.800 8.500V18H16.200V8.500" />
                <path d="M8 18V12H12V18" strokeWidth="1.400" />
              </svg>
              Member Center
            </MemberButton>
          </MemberRow>
          <TabRow>
            <Tab type="button">SM-F900J_BV.pdf</Tab>
            <button type="button" aria-label="Close all tabs">
              <svg width="19" height="18" viewBox="0 0 19 18" fill="none" stroke="#858585">
                <path d="M1.500 15V3Q1.500 1.500 3 1.500H15" strokeWidth="2" />
                <rect x="5" y="4" width="13.500" height="13.500" rx="1.500" fill="#858585" stroke="none" />
                <path d="M9 8 14.500 13.500M14.500 8 9 13.500" stroke="#fff" strokeWidth="1.500" />
              </svg>
            </button>
          </TabRow>
          <Tools>
            <Tool $width={20} type="button" aria-label="Two pages">
              <svg width="20" height="18" viewBox="0 0 20 18" fill="none" stroke="#333"><rect x=".5" y=".5" width="8" height="16" /><rect x="10.500" y=".5" width="8" height="16" /></svg>
            </Tool>
            <ToolDivider />
            <Tool $width={26} type="button" aria-label="Rotate left">
              <svg width="18" height="20" viewBox="0 0 18 20" fill="none" stroke="#333" strokeWidth="1.400"><rect x="1" y="7" width="14.500" height="12" rx="1.500" /><path d="M7 3Q14 1 17.500 7M10.500.5 7 3 10.500 5.500" /></svg>
            </Tool>
            <Tool $width={26} type="button" aria-label="Rotate right">
              <svg width="19" height="20" viewBox="0 0 19 20" fill="none" stroke="#333" strokeWidth="1.400"><rect x="3.500" y="7" width="14.500" height="12" rx="1.500" /><path d="M12 3Q4 1 .8 7M8.500.5 12 3 8.500 5.500" /></svg>
            </Tool>
            <ToolDivider />
            <ToolLabel htmlFor="page" $gap={5}>Page:</ToolLabel>
            <ToolInput id="page" $width={50} defaultValue="1" />
            <ToolLabel as="span" $gap={1}>/4</ToolLabel>
            <Tool $width={26} type="button" aria-label="Previous page">
              <svg width="19" height="17" viewBox="0 0 19 17" fill="none" stroke="#333" strokeWidth="1.200"><path d="M1 8.500 8.500 1V5H18V12H8.500V16Z" /></svg>
            </Tool>
            <Tool $width={26} type="button" aria-label="Next page">
              <svg width="19" height="17" viewBox="0 0 19 17" fill="none" stroke="#333" strokeWidth="1.200"><path d="M18 8.500 10.500 1V5H1V12H10.500V16Z" /></svg>
            </Tool>
            <ToolDivider />
            <Tool $width={24} type="button" aria-label="Zoom in">
              <svg width="18" height="18" viewBox="0 0 18 18" fill="none" stroke="#111" strokeWidth="1.800"><circle cx="8" cy="8" r="6.500" /><path d="M13 13 17 17M8 5V11M5 8H11" /></svg>
            </Tool>
            <Tool $width={26} type="button" aria-label="Zoom out">
              <svg width="18" height="18" viewBox="0 0 18 18" fill="none" stroke="#444" strokeWidth="1.200"><circle cx="8" cy="8" r="6.800" /><path d="M13 13 17 17M5 8H11" /></svg>
            </Tool>
            <ToolDivider />
            <ToolLabel htmlFor="lookup" $gap={5}>Lookup</ToolLabel>
            <ToolInput id="lookup" $width={150} />
            <Tool $width={26} type="button" aria-label="Find previous">
              <svg width="12" height="17" viewBox="0 0 12 17" fill="none" stroke="#333" strokeWidth="1.200"><path d="M1 8.500 10 1V16Z" /></svg>
            </Tool>
            <Tool $width={26} type="button" aria-label="Find next">
              <svg width="12" height="17" viewBox="0 0 12 17" fill="none" stroke="#333" strokeWidth="1.200"><path d="M11 8.500 2 1V16Z" /></svg>
            </Tool>
            <WordButton type="button">Abi</WordButton>
            <Tool $width={20} type="button" aria-label="Search document">
              <svg width="20" height="17" viewBox="0 0 20 17" fill="none" stroke="#333" strokeWidth="1.400">
                <circle cx="4.800" cy="11.800" r="4" /><circle cx="15.200" cy="11.800" r="4" />
                <path d="M.9 11 2 3Q2.500 1 4.500 1H6Q8.500 1 8.700 3V11M19.100 11 18 3Q17.500 1 15.500 1H14Q11.500 1 11.300 3V11M8.700 5H11.300M2 8H18" />
              </svg>
            </Tool>
          </Tools>
          <Viewer>
            <Desk>
              <Sheet><Board /></Sheet>
            </Desk>
            <PageScroll>
              <Chevron />
              <Thumb $top={1} $height={162} />
              <Spacer />
              <Chevron up={false} />
            </PageScroll>
          </Viewer>
        </Main>
      </Body>
      <StatusBar>XZZ Schematics https://www.xzz.hk</StatusBar>
    </Window>
  );
}
